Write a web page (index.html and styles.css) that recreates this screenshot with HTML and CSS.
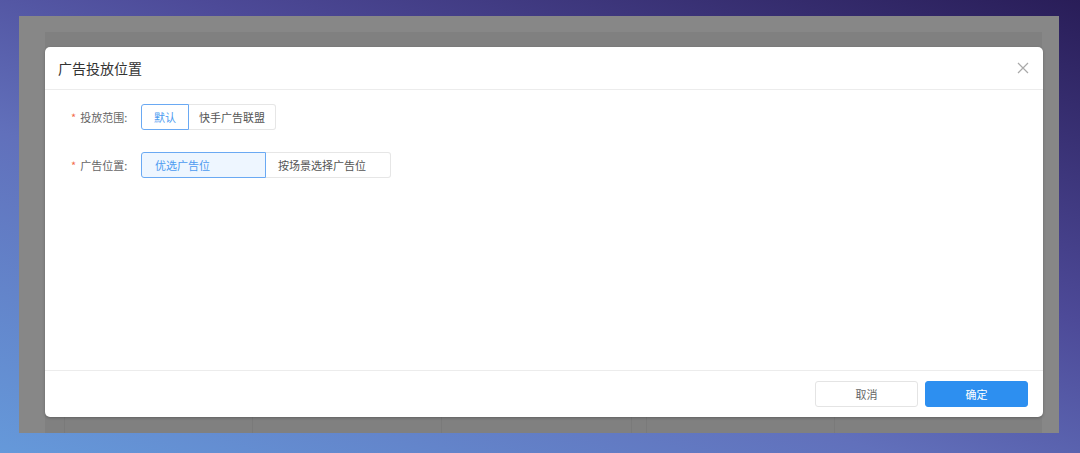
FILE: index.html
```html
<!DOCTYPE html>
<html lang="zh-CN">
<head>
    <meta charset="UTF-8">
    <meta name="viewport" content="width=device-width, initial-scale=1.0">
    <title>广告投放位置</title>
    <link rel="stylesheet" href="styles.css">
</head>
<body>
    <div id="screen">
        <div class="page">
            <div class="table-row">
                <div class="col c1"></div>
                <div class="col c2"></div>
                <div class="col c3"></div>
                <div class="col c4"></div>
                <div class="col c5"></div>
                <div class="col c6"></div>
                <div class="col c7"></div>
            </div>
        </div>
        <div id="modal">
            <div class="modal-head">
                <h1 class="title">广告投放位置</h1>
                <svg class="close" width="12" height="12" viewBox="0 0 12 12">
                    <path d="M1 1L11 11M11 1L1 11" stroke="#a9a9a9" stroke-width="1.2" fill="none"/>
                </svg>
            </div>
            <div class="modal-body">
                <div class="form-row">
                    <label class="fields"><span class="req">*</span>投放范围:</label>
                    <div class="group">
                        <button class="opt active w1">默认</button>
                        <button class="opt w2">快手广告联盟</button>
                    </div>
                </div>
                <div class="form-row">
                    <label class="fields"><span class="req">*</span>广告位置:</label>
                    <div class="group">
                        <button class="opt active filled w3">优选广告位</button>
                        <button class="opt left w3">按场景选择广告位</button>
                    </div>
                </div>
            </div>
            <div class="modal-foot">
                <button class="btn">取消</button>
                <button class="btn primary">确定</button>
            </div>
        </div>
    </div>
</body>
</html>
```

FILE: styles.css
```css
*{
    margin: 0;
    padding: 0;
    box-sizing: border-box;
}
body{
    width: 1080px;
    height: 453px;
    overflow: hidden;
    padding: 16px 0 0 19px;
    background: linear-gradient(20deg, #6599da 0%, #6170bb 38%, #4d4a98 62%, #291d58 100%);
    font-family: "Noto Sans CJK SC", "Noto Sans", sans-serif;
}
#screen{
    position: relative;
    width: 1040px;
    height: 417px;
    background-color: #878787;
    padding: 16px 17px 0 26px;
}
.page{
    height: 100%;
    background-color: #808080;
    display: flex;
    align-items: flex-end;
}
.table-row{
    display: flex;
    width: 100%;
    height: 16px;
}
.col{
    height: 100%;
    border-right: 1px solid #7a7a7a;
}
.c1{ width: 20px; }
.c2{ width: 188px; }
.c3{ width: 189px; }
.c4{ width: 190px; }
.c5{ width: 15px; }
.c6{ width: 188px; }
.c7{ flex: 1; border-right: none; }
#modal{
    position: absolute;
    left: 26px;
    top: 31px;
    width: 998px;
    height: 370px;
    background-color: #fff;
    border-radius: 5px;
    box-shadow: 0 1px 3px rgba(0, 0, 0, 0.25);
    display: flex;
    flex-direction: column;
}
.modal-head{
    height: 43px;
    display: flex;
    align-items: center;
    justify-content: space-between;
    padding: 0 14px 0 13px;
    border-bottom: 1px solid #ececec;
}
.title{
    font-size: 14px;
    font-weight: normal;
    color: #333;
}
.modal-body{
    flex: 1;
    padding: 14px 0 0 26px;
}
.form-row{
    display: flex;
    align-items: center;
    margin-bottom: 22px;
}
.fields{
    width: 70px;
    font-size: 11px;
    color: #666;
}
.req{
    color: #f36b4d;
    margin-right: 4px;
}
.group{
    display: flex;
}
.opt{
    height: 26px;
    font-family: inherit;
    font-size: 11px;
    color: #555;
    background-color: #fff;
    border: 1px solid #e6e6e6;
    border-left: none;
    cursor: pointer;
    text-align: center;
}
.opt:first-child{
    border-left: 1px solid #e6e6e6;
    border-radius: 3px 0 0 3px;
}
.opt:last-child{
    border-radius: 0 3px 3px 0;
}
.opt.active{
    border: 1px solid #6aa9f3;
    color: #4c9af0;
}
.opt.filled{
    background-color: #eef6ff;
    text-align: left;
    padding-left: 13px;
}
.opt.left{
    text-align: left;
    padding-left: 12px;
}
.w1{ width: 48px; }
.w2{ width: 87px; }
.w3{ width: 125px; }
.modal-foot{
    height: 47px;
    border-top: 1px solid #ececec;
    display: flex;
    align-items: center;
    justify-content: flex-end;
    gap: 7px;
    padding-right: 15px;
}
.btn{
    width: 103px;
    height: 26px;
    font-family: inherit;
    font-size: 11px;
    color: #666;
    background-color: #fff;
    border: 1px solid #e4e4e4;
    border-radius: 3px;
    cursor: pointer;
}
.btn.primary{
    background-color: #2d8ff0;
    border-color: #2d8ff0;
    color: #fff;
}
```
